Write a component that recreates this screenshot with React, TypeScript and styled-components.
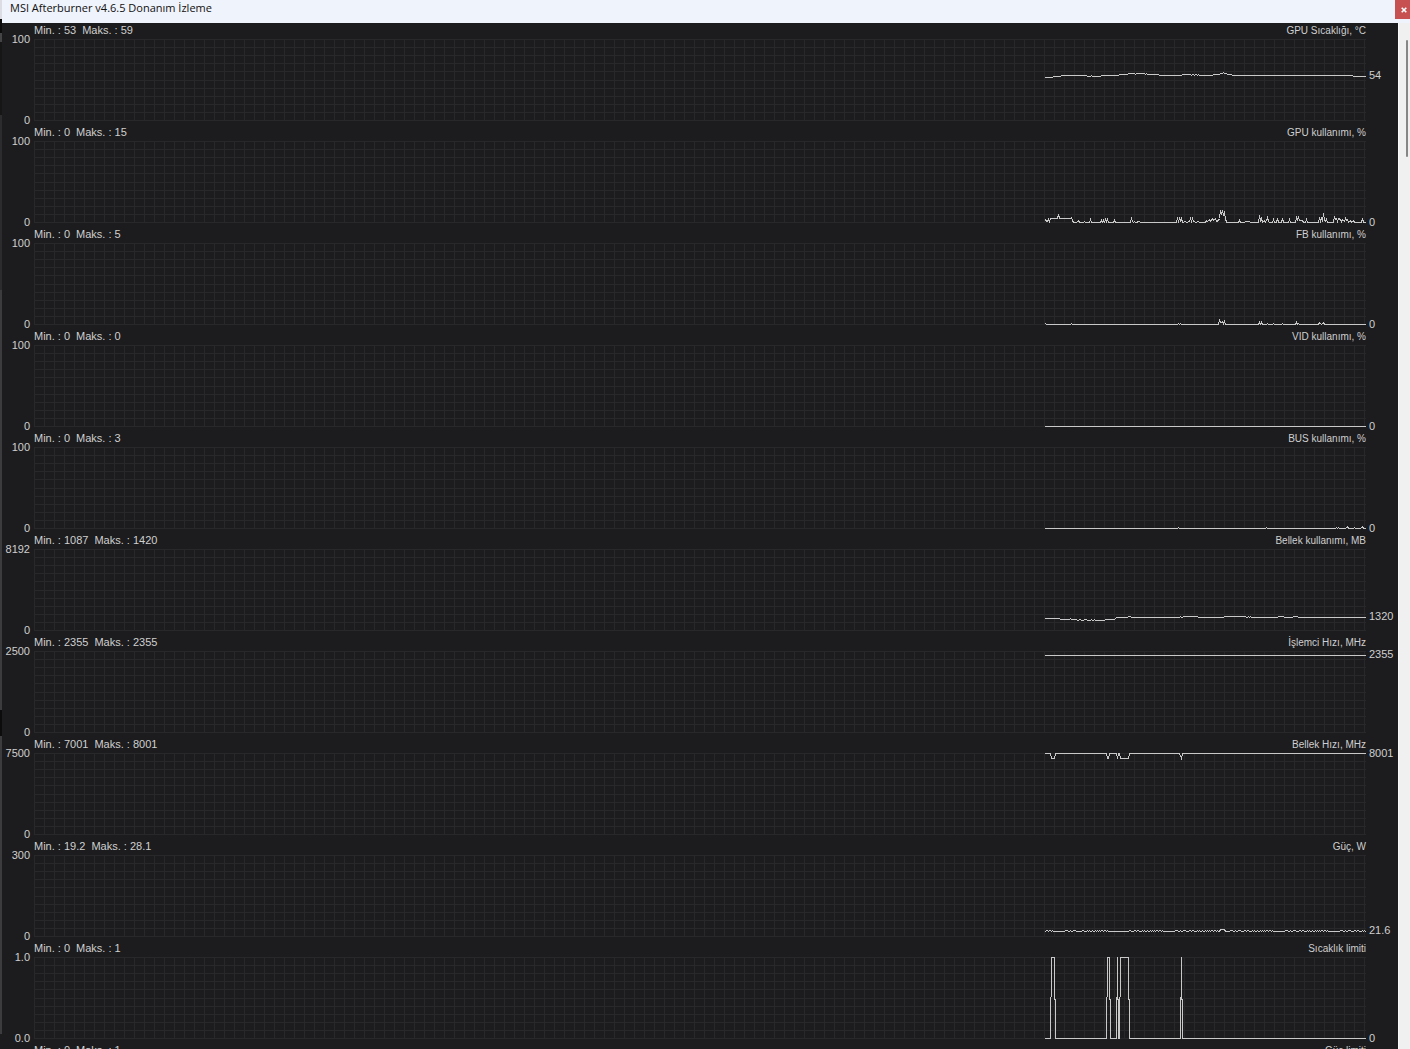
import React from "react";
import styled, { createGlobalStyle } from "styled-components";

type Point = [number, number];

interface Metric {
  label: string;
  min: string;
  max: string;
  top: string;
  bottom: string;
  value: string;
  trace: Point[];
}

const SAMPLES = 320;
const BASE = 81;
const GRID_ROWS = [0, 8, 16, 24, 32, 41, 49, 57, 65, 73, 81];

/* Heights above the zero line, turned into plot coordinates. */
const above = (points: Point[]): Point[] => points.map(([x, h]) => [x, BASE - h]);

/* Level runs: each entry starts a flat stretch that lasts until the next one. */
const runs = (levels: Point[]): Point[] =>
  levels.flatMap(([x, y], i): Point[] => {
    const end = i + 1 < levels.length ? levels[i + 1][0] - 1 : SAMPLES;
    return [[x, y], [end, y]];
  });

const temperature = runs([
  [0, 38], [8, 37], [16, 36], [42, 37], [46, 36], [47, 37], [56, 36], [74, 35], [83, 34], [90, 35],
  [91, 34], [100, 35], [101, 34], [102, 35], [114, 36], [137, 35], [146, 36], [147, 35], [149, 36],
  [150, 35], [152, 36], [153, 35], [154, 36], [168, 35], [175, 34], [178, 33], [179, 34], [182, 35],
  [187, 36], [308, 37],
]);

const gpuUsage = above([
  [0, 3], [1, 1], [2, 1], [3, 3], [4, 0], [5, 4], [12, 4], [13, 8], [14, 4], [25, 4], [26, 5], [27, 2],
  [28, 0], [31, 0], [32, 1], [33, 2], [34, 0], [38, 0], [39, 1], [40, 0], [44, 0], [45, 3], [46, 0],
  [55, 0], [56, 2], [57, 0], [58, 2], [59, 0], [60, 3], [61, 1], [62, 3], [63, 0], [68, 0], [69, 2],
  [70, 0], [85, 0], [86, 4], [87, 1], [88, 0], [89, 1], [90, 0], [94, 1], [95, 0], [131, 0], [132, 4],
  [133, 1], [134, 4], [135, 2], [136, 4], [137, 0], [140, 1], [141, 0], [144, 1], [145, 4], [146, 1],
  [147, 4], [148, 1], [149, 1], [150, 0], [153, 1], [154, 0], [160, 0], [161, 2], [162, 1], [164, 3],
  [165, 1], [167, 4], [168, 2], [170, 4], [171, 1], [173, 2], [174, 4], [175, 12], [176, 9], [177, 11],
  [178, 8], [179, 10], [180, 4], [181, 0], [193, 0], [194, 2], [195, 0], [204, 1], [205, 0], [213, 0],
  [214, 7], [215, 2], [216, 4], [217, 0], [219, 2], [220, 0], [222, 5], [223, 1], [224, 0], [227, 0],
  [228, 3], [229, 0], [231, 0], [232, 4], [233, 0], [236, 0], [237, 4], [238, 0], [243, 0], [244, 3],
  [245, 0], [250, 0], [251, 5], [252, 3], [253, 5], [254, 2], [257, 2], [258, 0], [260, 0], [261, 3],
  [262, 0], [273, 0], [274, 5], [275, 1], [276, 4], [277, 2], [278, 9], [279, 2], [280, 1], [281, 3],
  [282, 0], [288, 0], [289, 6], [290, 3], [291, 4], [292, 1], [293, 4], [295, 3], [296, 1], [297, 3],
  [299, 1], [300, 4], [301, 2], [302, 3], [303, 0], [305, 2], [306, 0], [308, 2], [309, 0], [316, 0],
  [317, 4], [318, 0], [320, 0],
]);

const fbUsage = above([
  [0, 1], [1, 0], [25, 0], [26, 1], [27, 0], [132, 0], [133, 1], [134, 0], [135, 1], [136, 0], [173, 0],
  [174, 4], [175, 2], [176, 2], [177, 3], [178, 1], [179, 3], [180, 0], [213, 0], [214, 2], [215, 0],
  [216, 2], [217, 0], [221, 0], [222, 1], [223, 0], [227, 0], [228, 1], [229, 0], [236, 0], [237, 1],
  [238, 0], [250, 0], [251, 2], [252, 0], [253, 1], [254, 0], [273, 0], [274, 2], [275, 1], [276, 0],
  [277, 1], [278, 2], [279, 0], [320, 0],
]);

const busUsage = above([
  [0, 0], [132, 0], [133, 1], [134, 0], [220, 0], [221, 1], [222, 0], [290, 0], [291, 1], [292, 0],
  [293, 1], [294, 0], [300, 0], [301, 1], [302, 2], [303, 0], [308, 0], [309, 1], [310, 0], [315, 0],
  [316, 1], [317, 2], [318, 0], [320, 0],
]);

const memoryUsage = runs([
  [0, 69], [15, 70], [25, 69], [26, 70], [32, 71], [34, 70], [36, 71], [39, 70], [42, 71], [46, 70],
  [47, 71], [49, 70], [50, 71], [60, 70], [70, 69], [71, 68], [83, 67], [86, 68], [135, 67], [136, 68],
  [138, 67], [153, 68], [179, 67], [201, 68], [203, 67], [204, 68], [205, 67], [206, 68], [233, 67],
  [239, 68], [248, 67], [253, 68],
]);

const memoryClock: Point[] = [
  [0, 0], [5, 0], [6, 5], [9, 5], [10, 0], [61, 0], [62, 5], [63, 5], [64, 0], [71, 0], [72, 5], [73, 0],
  [74, 0], [75, 5], [83, 5], [84, 0], [134, 0], [136, 5], [137, 0], [320, 0],
];

const power: Point[] = Array.from({ length: SAMPLES + 1 }, (_, x): Point => {
  if (x >= 175 && x <= 179) return [x, 74];
  const calm = (x > 30 && x < 37) || (x > 65 && x < 84) || (x > 121 && x < 130);
  return [x, calm || (x * 7 + ((x * x) % 11)) % 5 < 3 ? 76 : 75];
});

const temperatureLimit: Point[] = [
  [0, 81], [5, 81], [6, 0], [9, 0], [10, 81], [61, 81], [62, 0], [64, 0], [65, 81], [71, 81], [72, 0],
  [73, 81], [74, 81], [75, 0], [83, 0], [84, 81], [135, 81], [136, 0], [137, 81], [320, 81],
];

const flat = (y: number): Point[] => [[0, y], [SAMPLES, y]];

const metrics: Metric[] = [
  { label: "GPU Sıcaklığı, °C", min: "53", max: "59", top: "100", bottom: "0", value: "54", trace: temperature },
  { label: "GPU kullanımı, %", min: "0", max: "15", top: "100", bottom: "0", value: "0", trace: gpuUsage },
  { label: "FB kullanımı, %", min: "0", max: "5", top: "100", bottom: "0", value: "0", trace: fbUsage },
  { label: "VID kullanımı, %", min: "0", max: "0", top: "100", bottom: "0", value: "0", trace: flat(81) },
  { label: "BUS kullanımı, %", min: "0", max: "3", top: "100", bottom: "0", value: "0", trace: busUsage },
  { label: "Bellek kullanımı, MB", min: "1087", max: "1420", top: "8192", bottom: "0", value: "1320", trace: memoryUsage },
  { label: "İşlemci Hızı, MHz", min: "2355", max: "2355", top: "2500", bottom: "0", value: "2355", trace: flat(4) },
  { label: "Bellek Hızı, MHz", min: "7001", max: "8001", top: "7500", bottom: "0", value: "8001", trace: memoryClock },
  { label: "Güç, W", min: "19.2", max: "28.1", top: "300", bottom: "0", value: "21.6", trace: power },
  { label: "Sıcaklık limiti", min: "0", max: "1", top: "1.0", bottom: "0.0", value: "0", trace: temperatureLimit },
  { label: "Güç limiti", min: "0", max: "1", top: "1.0", bottom: "0.0", value: "0", trace: flat(81) },
];

const GlobalStyle = createGlobalStyle`
  *, *::before, *::after { box-sizing: border-box; }
  body { margin: 0; overflow: hidden; background: #1c1c1e; }
`;

const Window = styled.main`
  display: flex;
  flex-direction: column;
  height: 100vh;
  padding-left: 2px;
  background: linear-gradient(
    #dcdce4 0 19px,
    #0c0c0c 19px 33px,
    #444446 33px 42px,
    #161617 42px 115px,
    #2c2c2e 115px 290px,
    #3c3c3e 290px 710px,
    #0c0c0c 710px 736px,
    #3c3c3e 736px 1034px,
    #1c1c1e 1034px
  );
  font-family: "Liberation Sans", Arial, sans-serif;
  font-size: 11px;
  line-height: 12px;
  color: #cfcfcf;
`;

const TitleBar = styled.header`
  display: flex;
  justify-content: space-between;
  align-items: flex-start;
  flex: none;
  height: 23px;
  padding-left: 8px;
  background: #eff3fb;
`;

const Title = styled.h1`
  margin: 0;
  font: 400 11px/15px "Open Sans", "Noto Sans", sans-serif;
  color: #101010;
`;

const CloseButton = styled.button`
  display: flex;
  align-items: center;
  justify-content: flex-end;
  width: 15px;
  height: 19px;
  padding: 0 3px 0 0;
  border: 0;
  background: #c75050;
`;

const Body = styled.div`
  display: flex;
  flex: 1;
  min-height: 0;
`;

const Graphs = styled.div`
  flex: 1;
  min-width: 0;
  overflow: hidden;
  background: #1c1c1e;
`;

const Graph = styled.section`
  display: grid;
  grid-template-columns: 32px minmax(0, 1fr) 32px;
  grid-template-rows: 16px 82px;
  padding-bottom: 4px;
`;

const Heading = styled.div`
  grid-column: 2;
  display: flex;
  justify-content: space-between;
  align-items: baseline;
  padding-top: 1px;
`;

const Range = styled.p`
  display: flex;
  gap: 6px;
  margin: 0;
`;

const Name = styled.h2`
  margin: 0;
  font-size: 10px;
  font-weight: 400;
`;

const Axis = styled.div`
  grid-column: 1;
  display: flex;
  flex-direction: column;
  justify-content: space-between;
  align-items: flex-end;
  margin: -6px 4px -5px 0;
`;

const Plot = styled.svg`
  display: block;
  width: 100%;
  height: 82px;
  shape-rendering: crispEdges;
`;

const Current = styled.output`
  display: block;
  padding-left: 3px;
`;

const ScrollTrack = styled.div`
  flex: none;
  display: flex;
  justify-content: flex-end;
  width: 12px;
  padding: 17px 2px 0 0;
  border-left: 1px solid #fafafa;
  background: #f0f0f0;
`;

const ScrollThumb = styled.div`
  width: 2px;
  height: 117px;
  border-radius: 1px;
  background: #868686;
`;

const Defs = styled.svg`
  position: absolute;
`;

function GraphPanel({ metric }: { metric: Metric }) {
  const last = metric.trace[metric.trace.length - 1][1];
  const anchor = last === 0 || last === BASE ? last : last - 1;
  return (
    <Graph>
      <Heading>
        <Range>
          <span>Min. : {metric.min}</span>
          <span>Maks. : {metric.max}</span>
        </Range>
        <Name>{metric.label}</Name>
      </Heading>
      <Axis>
        <span>{metric.top}</span>
        <span>{metric.bottom}</span>
      </Axis>
      <Plot role="img" aria-label={metric.label}>
        <rect width="100%" height="82" fill="url(#graph-grid)" />
        <svg x="100%" overflow="visible">
          <polyline
            transform={`translate(${-SAMPLES - 0.5} 0.5)`}
            points={metric.trace.map((p) => p.join(",")).join(" ")}
            fill="none"
            stroke="#c8c8c8"
            strokeLinecap="square"
          />
        </svg>
      </Plot>
      <Current style={{ marginTop: anchor - 6 }}>{metric.value}</Current>
    </Graph>
  );
}

function GridPattern() {
  return (
    <Defs width="0" height="0" aria-hidden="true">
      <pattern id="graph-grid" width="10" height="82" patternUnits="userSpaceOnUse">
        <rect width="1" height="82" fill="#28282a" />
        {GRID_ROWS.map((y) => (
          <rect key={y} y={y} width="10" height="1" fill="#28282a" />
        ))}
      </pattern>
    </Defs>
  );
}

export default function App() {
  return (
    <Window>
      <GlobalStyle />
      <GridPattern />
      <TitleBar>
        <Title>MSI Afterburner v4.6.5 Donanım İzleme</Title>
        <CloseButton type="button" aria-label="Kapat">
          <svg width="6" height="6" viewBox="0 0 6 6" aria-hidden="true">
            <path d="M0.7 0.7L5.3 5.3M5.3 0.7L0.7 5.3" stroke="#fff" strokeWidth="1.6" />
          </svg>
        </CloseButton>
      </TitleBar>
      <Body>
        <Graphs>
          {metrics.map((metric) => (
            <GraphPanel key={metric.label} metric={metric} />
          ))}
        </Graphs>
        <ScrollTrack>
          <ScrollThumb />
        </ScrollTrack>
      </Body>
    </Window>
  );
}
